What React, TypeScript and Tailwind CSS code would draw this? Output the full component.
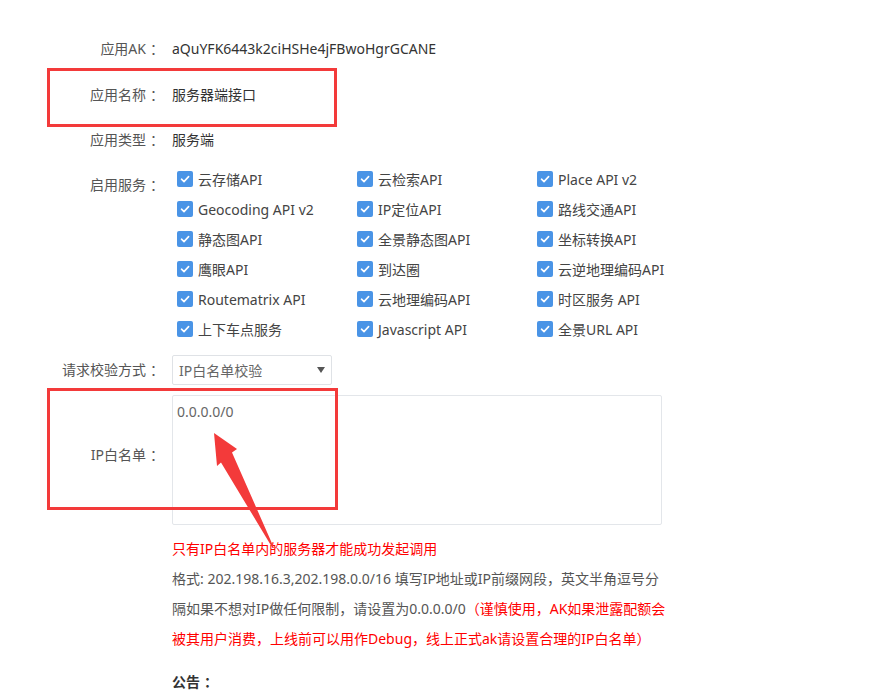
import React from "react";

const services: string[][] = [
  ["云存储API", "云检索API", "Place API v2"],
  ["Geocoding API v2", "IP定位API", "路线交通API"],
  ["静态图API", "全景静态图API", "坐标转换API"],
  ["鹰眼API", "到达圈", "云逆地理编码API"],
  ["Routematrix API", "云地理编码API", "时区服务 API"],
  ["上下车点服务", "Javascript API", "全景URL API"],
];

function Check() {
  return (
    <span className="w-[16px] h-[16px] rounded-[2px] bg-[#4a94e6] flex items-center justify-center shrink-0">
      <svg width="12" height="12" viewBox="0 0 12 12">
        <path d="M2.5 6.2 L5 8.6 L9.6 3.6" fill="none" stroke="#fff" strokeWidth="1.6" strokeLinecap="round" strokeLinejoin="round" />
      </svg>
    </span>
  );
}

function Colon() {
  return <span className="relative left-[4px]">：</span>;
}

const font = "font-['Noto_Sans','Noto_Sans_CJK_SC',sans-serif]";

export default function App() {
  return (
    <div className={`relative w-[876px] h-[697px] bg-white overflow-hidden text-[14px] ${font}`}>
      <div className="pt-[37px]">
        <div className="flex leading-[24px]">
          <div className="w-[160px] text-right text-[#555]">应用AK<Colon /></div>
          <div className="ml-[12px] text-[#333]">aQuYFK6443k2ciHSHe4jFBwoHgrGCANE</div>
        </div>
        <div className="flex leading-[24px] mt-[22px]">
          <div className="w-[160px] text-right text-[#555]">应用名称<Colon /></div>
          <div className="ml-[12px] text-[#333]">服务器端接口</div>
        </div>
        <div className="flex leading-[24px] mt-[21px]">
          <div className="w-[160px] text-right text-[#555]">应用类型<Colon /></div>
          <div className="ml-[12px] text-[#333]">服务端</div>
        </div>
        <div className="flex mt-[12px]">
          <div className="w-[160px] text-right text-[#555] leading-[30px] pt-[6px]">启用服务<Colon /></div>
          <div className="ml-[12px] flex flex-col">
            {services.map((row, i) => (
              <div key={i} className="flex h-[30px] items-center">
                {row.map((s) => (
                  <div key={s} className="w-[180px] flex items-center pl-[5px] gap-[5px] text-[#444] whitespace-nowrap">
                    <Check />
                    <span>{s}</span>
                  </div>
                ))}
              </div>
            ))}
          </div>
        </div>
        <div className="flex mt-[11px] items-center">
          <div className="w-[160px] text-right text-[#555] leading-[24px]">请求校验方式<Colon /></div>
          <div className="ml-[12px] w-[160px] h-[30px] border border-[#dfe2e6] rounded-[2px] flex items-center justify-between pl-[6px] pr-[6px] text-[#666]">
            <span>IP白名单校验</span>
            <svg width="8" height="6" viewBox="0 0 8 6">
              <path d="M0 0 H8 L4 6 Z" fill="#555" />
            </svg>
          </div>
        </div>
        <div className="flex mt-[10px]">
          <div className="w-[160px] text-right text-[#555] leading-[24px] pt-[48px]">IP白名单<Colon /></div>
          <div className="ml-[12px] w-[490px] h-[130px] border border-[#e3e6ea] rounded-[2px] px-[4px] pt-[4px] text-[#666] leading-[24px]">
            0.0.0.0/0
          </div>
        </div>
        <div className="ml-[172px] mt-[9px] leading-[30px] whitespace-nowrap">
          <div className="text-[#ff0000]">只有IP白名单内的服务器才能成功发起调用</div>
          <div className="text-[#555]">格式: 202.198.16.3,202.198.0.0/16 填写IP地址或IP前缀网段，英文半角逗号分</div>
          <div className="text-[#555]">
            隔如果不想对IP做任何限制，请设置为0.0.0.0/0<span className="text-[#ff0000]">（谨慎使用，AK如果泄露配额会</span>
          </div>
          <div className="text-[#ff0000]">被其用户消费，上线前可以用作Debug，线上正式ak请设置合理的IP白名单）</div>
        </div>
        <div className="ml-[172px] mt-[16px] leading-[24px] font-bold text-[#333]">公告<Colon /></div>
      </div>

      <div className="absolute left-[47px] top-[68px] w-[290px] h-[59px] border-[3px] border-[#f33a3a]" />
      <div className="absolute left-[47px] top-[388px] w-[291px] h-[122px] border-[3px] border-[#f33a3a]" />
      <svg className="absolute left-0 top-0" width="876" height="697" viewBox="0 0 876 697">
        <polygon
          points="214,433 237,449 232,452.5 274,548 272.5,548 221,462.5 217,466"
          fill="#f33a3a"
        />
      </svg>
    </div>
  );
}
